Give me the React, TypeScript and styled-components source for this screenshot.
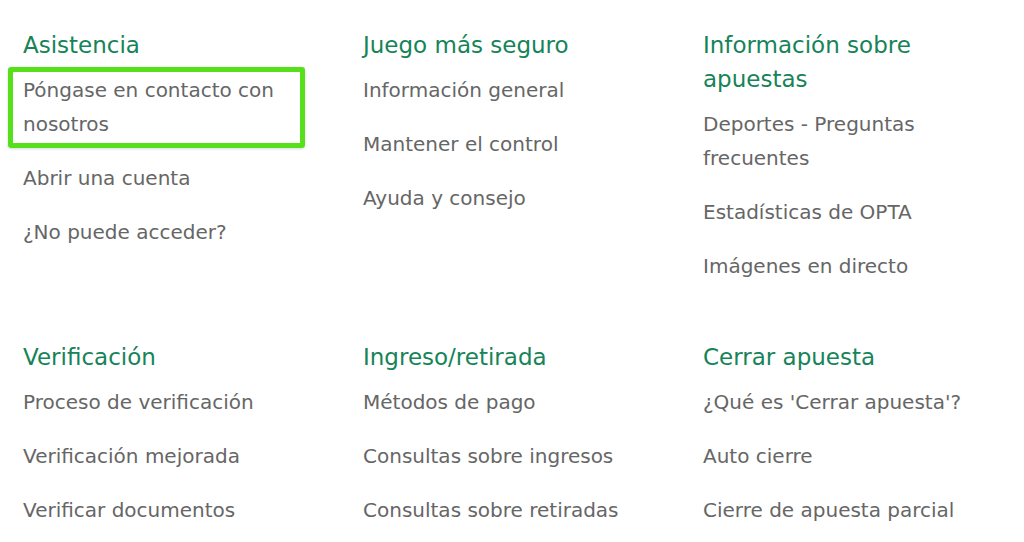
import { styled, createGlobalStyle } from 'styled-components';

const GlobalStyle = createGlobalStyle`
  body {
    margin: 0;
    background: #ffffff;
    font-family: "DejaVu Sans", Verdana, sans-serif;
  }
`;

const Footer = styled.div`
  display: grid;
  grid-template-columns: repeat(3, 340px);
  row-gap: 57px;
  padding: 28px 0 0 23px;
`;
const Section = styled.div`
  display: flex;
  flex-direction: column;
`;
const Title = styled.div`
  font-size: 23px;
  line-height: 34px;
  color: #168358;
  margin-bottom: 11px;
  max-width: 260px;
`;
const LinkList = styled.ul`
  list-style: none;
  margin: 0;
  padding: 0;
  display: flex;
  flex-direction: column;
  gap: 20px;
`;
const LinkItem = styled.li<{ $highlight?: boolean }>`
  position: relative;
  font-size: 20px;
  line-height: 34px;
  color: #666666;
  max-width: ${({ $highlight }) => ($highlight ? '270px' : '290px')};
  &::after {
    content: '';
    display: ${({ $highlight }) => ($highlight ? 'block' : 'none')};
    position: absolute;
    top: -6px;
    bottom: -7px;
    left: -15px;
    width: 297px;
    box-sizing: border-box;
    border: 5px solid #55e01a;
    border-radius: 3px;
    box-shadow: 0 1px 3px rgba(0, 0, 0, 0.15);
  }
`;

const sections = [
  {
    title: 'Asistencia',
    links: ['Póngase en contacto con nosotros', 'Abrir una cuenta', '¿No puede acceder?'],
    highlight: 0,
  },
  {
    title: 'Juego más seguro',
    links: ['Información general', 'Mantener el control', 'Ayuda y consejo'],
  },
  {
    title: 'Información sobre apuestas',
    links: ['Deportes - Preguntas frecuentes', 'Estadísticas de OPTA', 'Imágenes en directo'],
  },
  {
    title: 'Verificación',
    links: ['Proceso de verificación', 'Verificación mejorada', 'Verificar documentos'],
  },
  {
    title: 'Ingreso/retirada',
    links: ['Métodos de pago', 'Consultas sobre ingresos', 'Consultas sobre retiradas'],
  },
  {
    title: 'Cerrar apuesta',
    links: ["¿Qué es 'Cerrar apuesta'?", 'Auto cierre', 'Cierre de apuesta parcial'],
  },
];

function App() {
  return (
    <>
      <GlobalStyle />
      <Footer>
        {sections.map((s) => (
          <Section key={s.title}>
            <Title>{s.title}</Title>
            <LinkList>
              {s.links.map((l, i) => (
                <LinkItem key={l} $highlight={s.highlight === i}>
                  {l}
                </LinkItem>
              ))}
            </LinkList>
          </Section>
        ))}
      </Footer>
    </>
  );
}

export default App;
